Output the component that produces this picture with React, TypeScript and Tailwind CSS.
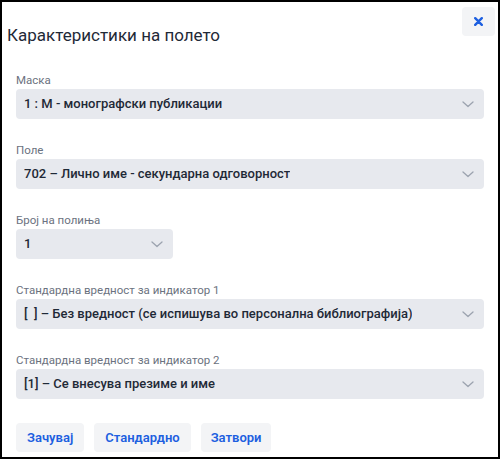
import * as React from 'react';

const font = { fontFamily: 'Roboto, "Noto Sans", sans-serif' };

function Chevron() {
  return (
    <svg width="12" height="7" viewBox="0 0 12 7" fill="none" className="shrink-0">
      <path d="M1 1l5 4.5L11 1" stroke="#9ca3af" strokeWidth="1.3" strokeLinecap="round" strokeLinejoin="round" />
    </svg>
  );
}

function Field({ label, value, narrow }: { label: string; value: string; narrow?: boolean }) {
  return (
    <div className="flex flex-col">
      <label className="text-[11.5px] leading-[18px] text-[#6b7280]">{label}</label>
      <div
        className={
          narrow
            ? 'flex h-[30px] w-[157px] items-center justify-between rounded bg-[#e7e9ee] pl-[8px] pr-[10px]'
            : 'flex h-[30px] w-full items-center justify-between rounded bg-[#e7e9ee] pl-[8px] pr-[10px]'
        }
      >
        <span className="truncate whitespace-pre text-[13px] font-medium text-[#1f2937]">{value}</span>
        <Chevron />
      </div>
    </div>
  );
}

export default function App() {
  return (
    <div style={font} className="flex h-[459px] w-[500px] flex-col border-2 border-black bg-white">
      {/* Header */}
      <div className="flex h-[69px] items-start justify-between pl-[5px] pr-[3px]">
        <h2 className="mt-[22px] text-[17px] leading-[22px] text-[#1f2937]">Карактеристики на полето</h2>
        <button className="mt-[5px] flex h-[29px] w-[33px] items-center justify-center rounded bg-[#f3f4f6]">
          <svg width="9" height="9" viewBox="0 0 9 9">
            <path d="M1.2 1.2l6.6 6.6M7.8 1.2L1.2 7.8" stroke="#1d5fe0" strokeWidth="2.4" strokeLinecap="round" />
          </svg>
        </button>
      </div>

      {/* Fields */}
      <div className="flex flex-col gap-[22px] px-[14px]">
        <Field label="Маска" value="1 : M - монографски публикации" />
        <Field label="Поле" value="702 – Лично име - секундарна одговорност" />
        <Field label="Број на полиња" value="1" narrow />
        <Field
          label="Стандардна вредност за индикатор 1"
          value="[  ] – Без вредност (се испишува во персонална библиографија)"
        />
        <Field label="Стандардна вредност за индикатор 2" value="[1] – Се внесува презиме и име" />
      </div>

      {/* Actions */}
      <div className="mt-[24px] flex gap-[10px] px-[14px]">
        <button className="h-[29px] rounded bg-[#f3f4f6] px-[11px] text-[13px] font-semibold text-[#1d5fe0]">Зачувај</button>
        <button className="h-[29px] rounded bg-[#f3f4f6] px-[11px] text-[13px] font-semibold text-[#1d5fe0]">Стандардно</button>
        <button className="h-[29px] rounded bg-[#f3f4f6] px-[10px] text-[13px] font-semibold text-[#1d5fe0]">Затвори</button>
      </div>
    </div>
  );
}
